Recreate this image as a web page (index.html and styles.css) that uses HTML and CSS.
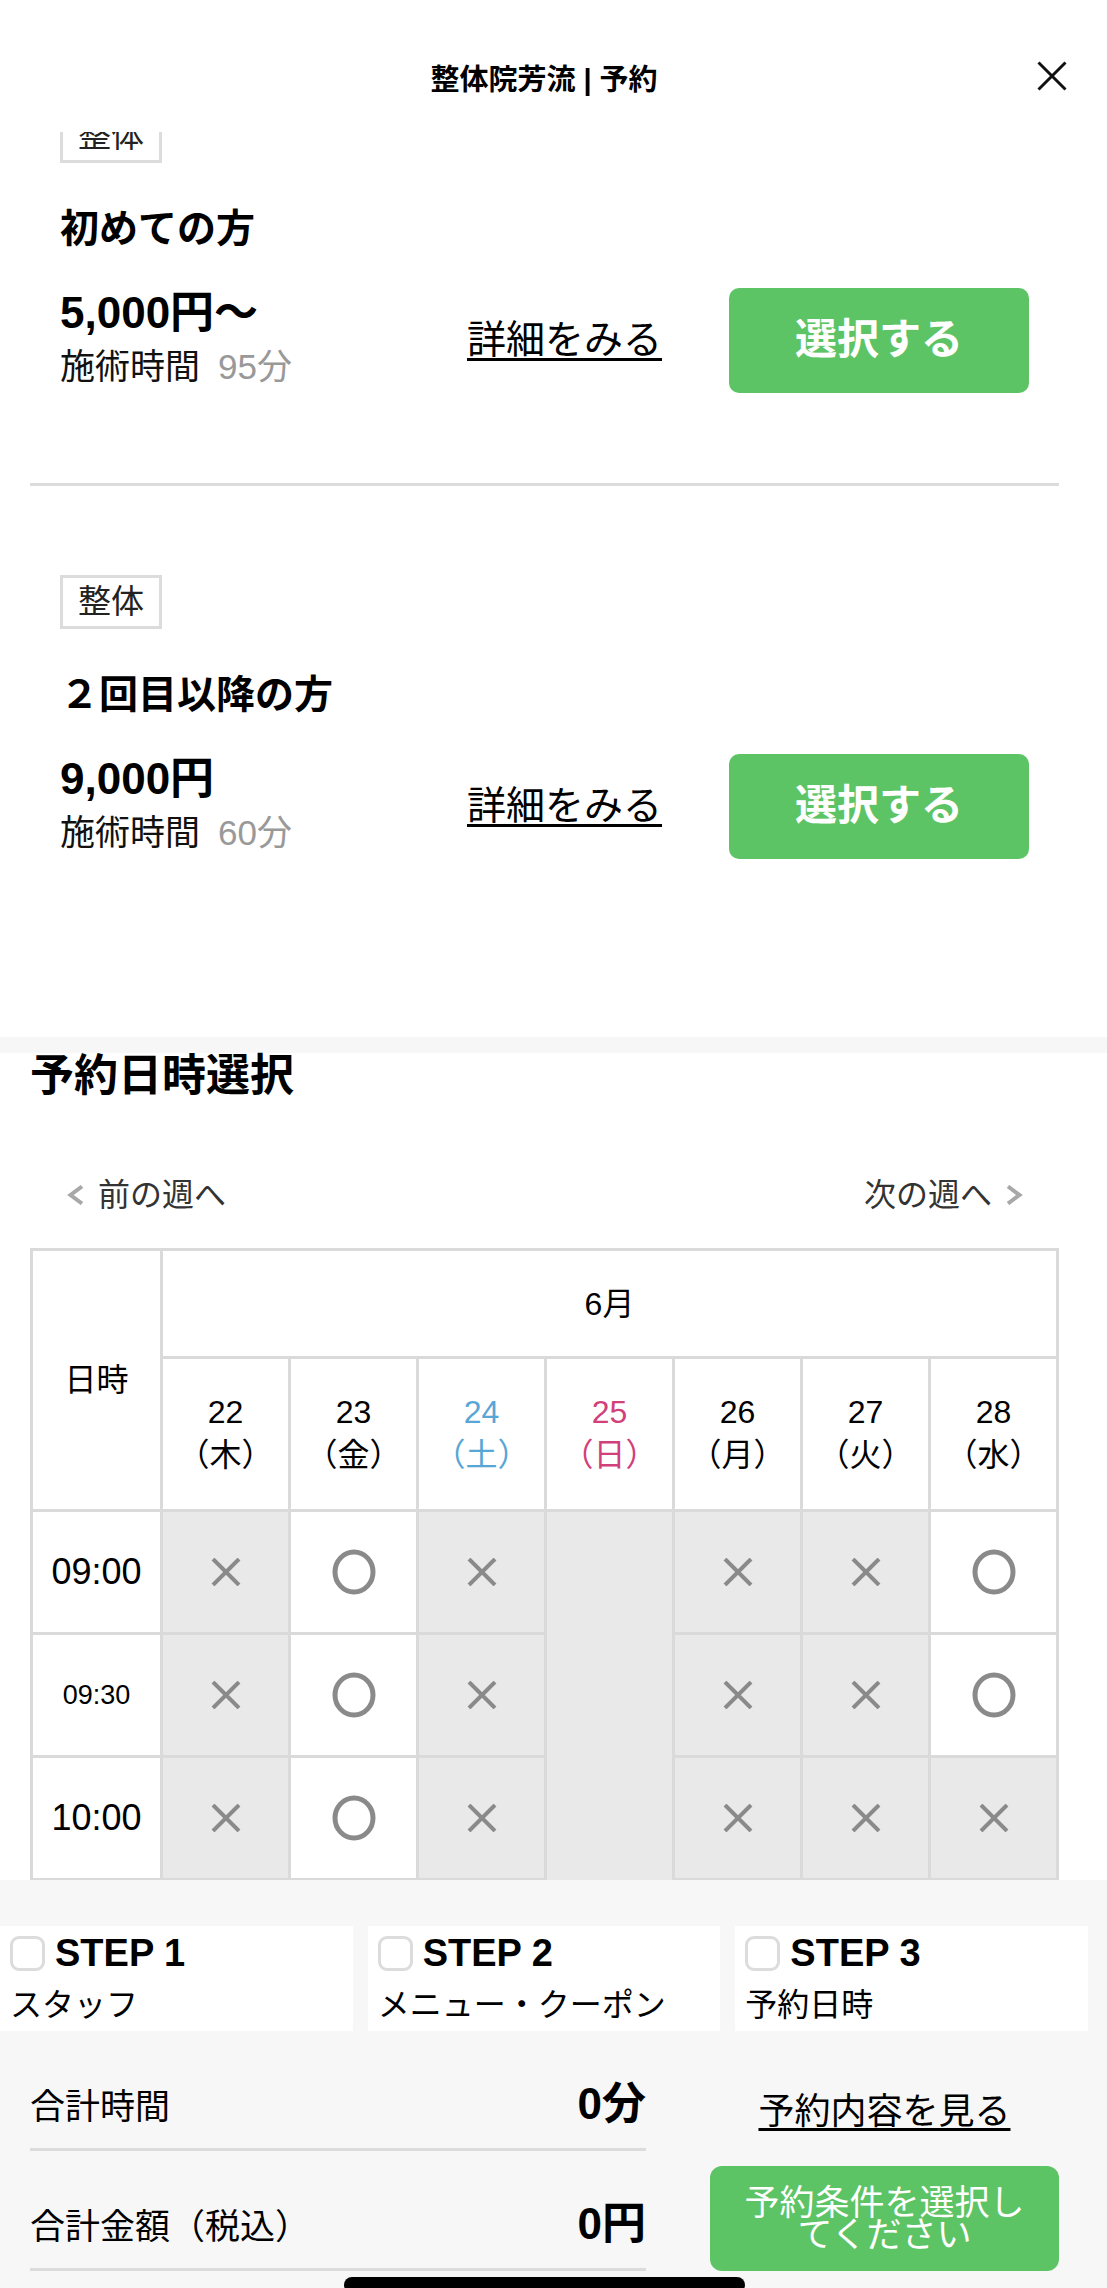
FILE: index.html
```html
<!DOCTYPE html>
<html lang="ja">
<head>
<meta charset="utf-8">
<title>整体院芳流 | 予約</title>
<link rel="stylesheet" href="styles.css">
</head>
<body>
<div class="app">
  <header class="topbar">
    <h1 class="topbar-title">整体院芳流 | 予約</h1>
    <button class="close-btn" aria-label="閉じる">
      <svg viewBox="0 0 30 30"><path d="M1.5 1.5L28.5 28.5M28.5 1.5L1.5 28.5"/></svg>
    </button>
  </header>

  <main class="scroll">
    <section class="menu-list">
      <article class="menu-card">
        <span class="menu-tag">整体</span>
        <h2 class="menu-name">初めての方</h2>
        <div class="menu-row">
          <div class="menu-info">
            <p class="menu-price">5,000円〜</p>
            <p class="menu-time">施術時間<span class="menu-minutes">95分</span></p>
          </div>
          <a class="menu-detail" href="#">詳細をみる</a>
          <button class="select-btn">選択する</button>
        </div>
      </article>
      <article class="menu-card">
        <span class="menu-tag">整体</span>
        <h2 class="menu-name">２回目以降の方</h2>
        <div class="menu-row">
          <div class="menu-info">
            <p class="menu-price">9,000円</p>
            <p class="menu-time">施術時間<span class="menu-minutes">60分</span></p>
          </div>
          <a class="menu-detail" href="#">詳細をみる</a>
          <button class="select-btn">選択する</button>
        </div>
      </article>
    </section>

    <div class="band"></div>

    <section class="date-section">
      <h2 class="date-title">予約日時選択</h2>
      <nav class="week-nav">
        <a class="week-link week-prev" href="#">
          <svg class="chev" viewBox="0 0 18 20"><path d="M15 1.5L3.5 10L15 18.5"/></svg>前の週へ
        </a>
        <a class="week-link week-next" href="#">次の週へ
          <svg class="chev" viewBox="0 0 18 20"><path d="M3 1.5L14.5 10L3 18.5"/></svg>
        </a>
      </nav>

      <table class="slots">
        <colgroup><col class="col-time"><col span="7"></colgroup>
        <thead>
          <tr class="row-month">
            <th rowspan="2" class="th-datetime">日時</th>
            <th colspan="7">6月</th>
          </tr>
          <tr class="row-days">
            <th>22<br>（木）</th>
            <th>23<br>（金）</th>
            <th class="sat">24<br>（土）</th>
            <th class="sun">25<br>（日）</th>
            <th>26<br>（月）</th>
            <th>27<br>（火）</th>
            <th>28<br>（水）</th>
          </tr>
        </thead>
        <tbody>
          <tr class="slot-row">
            <th class="time">09:00</th>
            <td class="ng"><svg class="ic-x" viewBox="0 0 30 28"><path d="M2 1L28 27M28 1L2 27"/></svg></td>
            <td class="ok"><svg class="ic-o" viewBox="0 0 44 46"><ellipse cx="22" cy="23" rx="19" ry="20"/></svg></td>
            <td class="ng"><svg class="ic-x" viewBox="0 0 30 28"><path d="M2 1L28 27M28 1L2 27"/></svg></td>
            <td class="closed" rowspan="4"></td>
            <td class="ng"><svg class="ic-x" viewBox="0 0 30 28"><path d="M2 1L28 27M28 1L2 27"/></svg></td>
            <td class="ng"><svg class="ic-x" viewBox="0 0 30 28"><path d="M2 1L28 27M28 1L2 27"/></svg></td>
            <td class="ok"><svg class="ic-o" viewBox="0 0 44 46"><ellipse cx="22" cy="23" rx="19" ry="20"/></svg></td>
          </tr>
          <tr class="slot-row">
            <th class="time time-sm">09:30</th>
            <td class="ng"><svg class="ic-x" viewBox="0 0 30 28"><path d="M2 1L28 27M28 1L2 27"/></svg></td>
            <td class="ok"><svg class="ic-o" viewBox="0 0 44 46"><ellipse cx="22" cy="23" rx="19" ry="20"/></svg></td>
            <td class="ng"><svg class="ic-x" viewBox="0 0 30 28"><path d="M2 1L28 27M28 1L2 27"/></svg></td>
            <td class="ng"><svg class="ic-x" viewBox="0 0 30 28"><path d="M2 1L28 27M28 1L2 27"/></svg></td>
            <td class="ng"><svg class="ic-x" viewBox="0 0 30 28"><path d="M2 1L28 27M28 1L2 27"/></svg></td>
            <td class="ok"><svg class="ic-o" viewBox="0 0 44 46"><ellipse cx="22" cy="23" rx="19" ry="20"/></svg></td>
          </tr>
          <tr class="slot-row">
            <th class="time">10:00</th>
            <td class="ng"><svg class="ic-x" viewBox="0 0 30 28"><path d="M2 1L28 27M28 1L2 27"/></svg></td>
            <td class="ok"><svg class="ic-o" viewBox="0 0 44 46"><ellipse cx="22" cy="23" rx="19" ry="20"/></svg></td>
            <td class="ng"><svg class="ic-x" viewBox="0 0 30 28"><path d="M2 1L28 27M28 1L2 27"/></svg></td>
            <td class="ng"><svg class="ic-x" viewBox="0 0 30 28"><path d="M2 1L28 27M28 1L2 27"/></svg></td>
            <td class="ng"><svg class="ic-x" viewBox="0 0 30 28"><path d="M2 1L28 27M28 1L2 27"/></svg></td>
            <td class="ng"><svg class="ic-x" viewBox="0 0 30 28"><path d="M2 1L28 27M28 1L2 27"/></svg></td>
          </tr>
          <tr class="slot-row">
            <th class="time">10:30</th>
            <td class="ng"><svg class="ic-x" viewBox="0 0 30 28"><path d="M2 1L28 27M28 1L2 27"/></svg></td>
            <td class="ok"><svg class="ic-o" viewBox="0 0 44 46"><ellipse cx="22" cy="23" rx="19" ry="20"/></svg></td>
            <td class="ng"><svg class="ic-x" viewBox="0 0 30 28"><path d="M2 1L28 27M28 1L2 27"/></svg></td>
            <td class="ng"><svg class="ic-x" viewBox="0 0 30 28"><path d="M2 1L28 27M28 1L2 27"/></svg></td>
            <td class="ng"><svg class="ic-x" viewBox="0 0 30 28"><path d="M2 1L28 27M28 1L2 27"/></svg></td>
            <td class="ng"><svg class="ic-x" viewBox="0 0 30 28"><path d="M2 1L28 27M28 1L2 27"/></svg></td>
          </tr>
        </tbody>
      </table>
    </section>
  </main>

  <footer class="bottom-panel">
    <ol class="steps">
      <li class="step">
        <div class="step-head"><span class="step-check"></span><span class="step-label">STEP 1</span></div>
        <div class="step-name">スタッフ</div>
      </li>
      <li class="step">
        <div class="step-head"><span class="step-check"></span><span class="step-label">STEP 2</span></div>
        <div class="step-name">メニュー・クーポン</div>
      </li>
      <li class="step">
        <div class="step-head"><span class="step-check"></span><span class="step-label">STEP 3</span></div>
        <div class="step-name">予約日時</div>
      </li>
    </ol>
    <div class="summary">
      <dl class="totals">
        <div class="total-row"><dt>合計時間</dt><dd>0分</dd></div>
        <div class="total-row"><dt>合計金額（税込）</dt><dd>0円</dd></div>
      </dl>
      <div class="actions">
        <a class="view-link" href="#">予約内容を見る</a>
        <button class="submit-btn">予約条件を選択し<br>てください</button>
      </div>
    </div>
  </footer>

  <div class="home-indicator"></div>
</div>
</body>
</html>
```

FILE: styles.css
```css
* { box-sizing: border-box; }

body {
  margin: 0;
  font-family: "Liberation Sans", "Noto Sans CJK JP", sans-serif;
  color: #000;
  background: #fff;
}

.app {
  position: relative;
  width: 1107px;
  height: 2288px;
  display: flex;
  flex-direction: column;
  overflow: hidden;
  background: #fff;
}

/* ---------- top bar ---------- */
.topbar {
  flex: none;
  height: 132px;
  display: grid;
  grid-template-columns: 1fr auto 1fr;
  padding-right: 19px;
  background: #fff;
}
.topbar-title {
  grid-column: 2;
  margin: 0;
  padding-top: 60px;
  font-size: 29px;
  line-height: 40px;
  font-weight: 700;
}
.close-btn {
  grid-column: 3;
  justify-self: end;
  align-self: start;
  width: 30px;
  height: 30px;
  margin: 61px 21px 0 0;
  padding: 0;
  border: 0;
  background: none;
}
.close-btn svg {
  display: block;
  width: 30px;
  height: 30px;
  fill: none;
  stroke: #111;
  stroke-width: 3;
}

/* ---------- scroll area ---------- */
.scroll {
  flex: 1;
  min-height: 0;
  overflow: hidden;
}

.menu-list {
  margin: 0 48px 0 30px;
  padding-bottom: 88px;
}
.menu-card {
  padding: 89px 30px 89px;
  border-top: 3px solid #dcdcdc;
}
.menu-card:first-child {
  margin-top: -23px;
  padding-top: 0;
  border-top: 0;
}
.menu-tag {
  display: block;
  width: fit-content;
  padding: 0 15px;
  border: 3px solid #dcdcdc;
  font-size: 33px;
  line-height: 48px;
  color: #222;
}
.menu-name {
  margin: 42px 0 0;
  font-size: 39px;
  line-height: 48px;
  font-weight: 700;
}
.menu-row {
  display: flex;
  align-items: center;
  margin-top: 33px;
}
.menu-info { flex: 1; }
.menu-price {
  margin: 0;
  font-size: 44px;
  line-height: 54px;
  font-weight: 700;
}
.menu-time {
  margin: 0;
  font-size: 35px;
  line-height: 54px;
  color: #111;
}
.menu-minutes {
  margin-left: 18px;
  color: #999;
}
.menu-detail {
  font-size: 39px;
  line-height: 50px;
  color: #000;
  text-decoration: underline;
  text-decoration-thickness: 3px;
  text-underline-offset: 5px;
}
.select-btn {
  width: 300px;
  height: 105px;
  margin-left: 67px;
  padding: 0;
  border: 0;
  border-radius: 10px;
  background: #5dc466;
  color: #fff;
  font-family: inherit;
  font-size: 42px;
  font-weight: 700;
  line-height: 1;
}

.band {
  height: 16px;
  background: #f7f7f7;
}

/* ---------- date section ---------- */
.date-section {
  margin: 0 48px 0 30px;
}
.date-title {
  margin: 0;
  font-size: 44px;
  line-height: 46px;
  font-weight: 700;
}
.week-nav {
  display: flex;
  justify-content: space-between;
  align-items: center;
  height: 40px;
  margin-top: 76px;
  padding: 0 36px 0 37px;
}
.week-link {
  display: flex;
  align-items: center;
  gap: 13px;
  font-size: 32px;
  line-height: 40px;
  color: #333;
  text-decoration: none;
}
.chev {
  width: 18px;
  height: 20px;
  fill: none;
  stroke: #a8a8a8;
  stroke-width: 4;
}

.slots {
  width: 1029px;
  margin-top: 33px;
  border-collapse: collapse;
  table-layout: fixed;
}
.col-time { width: 130px; }
.slots th,
.slots td {
  padding: 0;
  border: 3px solid #dadada;
  text-align: center;
  vertical-align: middle;
  font-weight: 400;
}
.row-month { height: 108px; }
.row-month th {
  font-size: 32px;
  line-height: 40px;
}
.row-days { height: 153px; }
.row-days th {
  font-size: 32px;
  line-height: 43px;
}
.th-datetime { background: #fff; }
.sat { color: #58a6d6; }
.sun { color: #d1407a; }

.slot-row { height: 123px; }
.time {
  font-size: 36px;
  line-height: 40px;
  background: #fff;
}
.time-sm { font-size: 27px; }
.ng, .closed { background: #e9e9e9; }
.ok { background: #fff; }

.ic-x {
  display: block;
  width: 30px;
  height: 28px;
  margin: 0 auto;
  fill: none;
  stroke: #8a8a8a;
  stroke-width: 4;
}
.ic-o {
  display: block;
  width: 44px;
  height: 46px;
  margin: 0 auto;
  fill: none;
  stroke: #8a8a8a;
  stroke-width: 5;
}

/* ---------- bottom panel ---------- */
.bottom-panel {
  flex: none;
  height: 408px;
  padding-top: 46px;
  background: #f7f7f7;
}
.steps {
  list-style: none;
  margin: 0;
  padding: 0 19px 0 0;
  display: grid;
  grid-template-columns: repeat(3, 1fr);
  gap: 15px;
}
.step {
  height: 105px;
  padding: 0 10px;
  background: #fff;
}
.step-head {
  display: flex;
  align-items: center;
  gap: 10px;
  height: 54px;
}
.step-check {
  width: 35px;
  height: 35px;
  border: 3px solid #dcdcdc;
  border-radius: 9px;
  background: #fff;
}
.step-label {
  font-size: 38px;
  line-height: 54px;
  font-weight: 700;
}
.step-name {
  font-size: 32px;
  line-height: 50px;
}

.summary {
  display: flex;
  gap: 64px;
  margin: 0 48px 0 30px;
}
.totals {
  flex: 1;
  margin: 0;
}
.total-row {
  display: flex;
  justify-content: space-between;
  align-items: baseline;
  height: 120px;
  padding-top: 43px;
  border-bottom: 3px solid #dcdcdc;
}
.total-row dt {
  font-size: 35px;
  line-height: 50px;
}
.total-row dd {
  margin: 0;
  font-size: 44px;
  line-height: 60px;
  font-weight: 700;
}
.actions {
  width: 349px;
  display: flex;
  flex-direction: column;
  align-items: center;
}
.view-link {
  margin-top: 56px;
  font-size: 36px;
  line-height: 50px;
  color: #000;
  text-decoration: underline;
  text-decoration-thickness: 3px;
  text-underline-offset: 4px;
}
.submit-btn {
  width: 349px;
  height: 105px;
  margin-top: 29px;
  padding: 0;
  border: 0;
  border-radius: 12px;
  background: #5dc466;
  color: #fff;
  font-family: inherit;
  font-size: 35px;
  line-height: 32px;
}

.home-indicator {
  position: absolute;
  left: 344px;
  bottom: -5px;
  width: 401px;
  height: 16px;
  border-radius: 8px;
  background: #000;
}
```
